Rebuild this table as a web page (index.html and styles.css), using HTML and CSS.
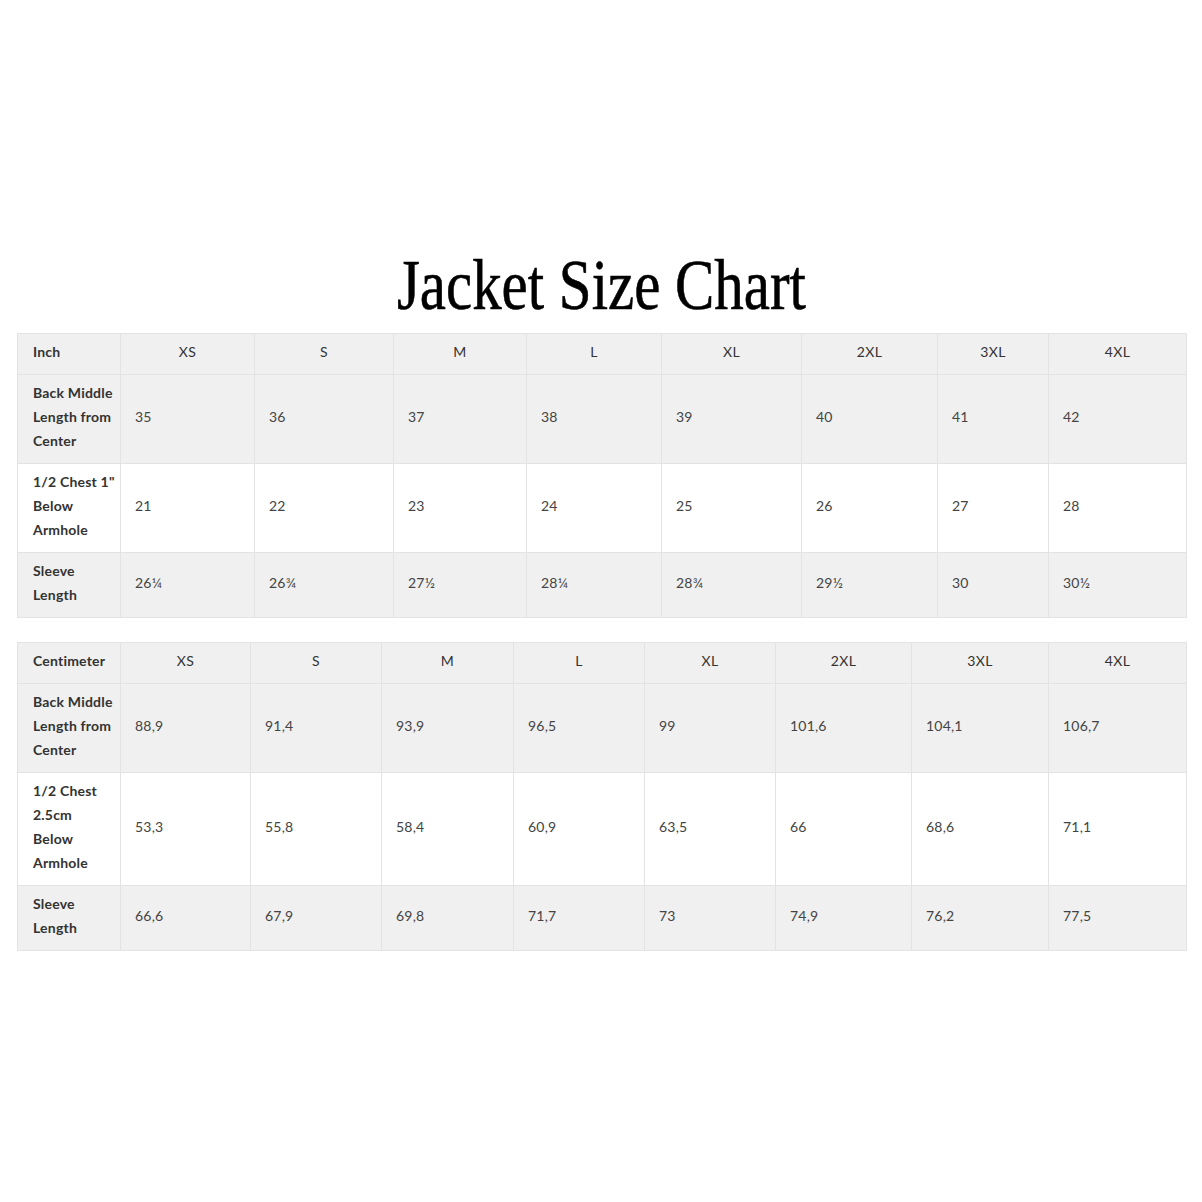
FILE: index.html
```html
<!DOCTYPE html>
<html lang="en">
<head>
<meta charset="utf-8">
<title>Jacket Size Chart</title>
<link rel="stylesheet" href="styles.css">
</head>
<body>
<main class="page">
  <h1 class="title"><span class="title-text">Jacket Size Chart</span></h1>

  <table class="chart chart-inch">
    <colgroup>
      <col><col><col><col><col><col><col><col><col>
    </colgroup>
    <tr class="row-head">
      <th class="label">Inch</th>
      <th>XS</th><th>S</th><th>M</th><th>L</th><th>XL</th><th>2XL</th><th>3XL</th><th>4XL</th>
    </tr>
    <tr class="row-grey">
      <th class="label">Back Middle Length from Center</th>
      <td>35</td><td>36</td><td>37</td><td>38</td><td>39</td><td>40</td><td>41</td><td>42</td>
    </tr>
    <tr class="row-white">
      <th class="label">1/2 Chest 1" Below Armhole</th>
      <td>21</td><td>22</td><td>23</td><td>24</td><td>25</td><td>26</td><td>27</td><td>28</td>
    </tr>
    <tr class="row-grey">
      <th class="label">Sleeve Length</th>
      <td>26¼</td><td>26¾</td><td>27½</td><td>28¼</td><td>28¾</td><td>29½</td><td>30</td><td>30½</td>
    </tr>
  </table>

  <table class="chart chart-cm">
    <colgroup>
      <col><col><col><col><col><col><col><col><col>
    </colgroup>
    <tr class="row-head">
      <th class="label">Centimeter</th>
      <th>XS</th><th>S</th><th>M</th><th>L</th><th>XL</th><th>2XL</th><th>3XL</th><th>4XL</th>
    </tr>
    <tr class="row-grey">
      <th class="label">Back Middle Length from Center</th>
      <td>88,9</td><td>91,4</td><td>93,9</td><td>96,5</td><td>99</td><td>101,6</td><td>104,1</td><td>106,7</td>
    </tr>
    <tr class="row-white">
      <th class="label">1/2 Chest<br>2.5cm<br>Below<br>Armhole</th>
      <td>53,3</td><td>55,8</td><td>58,4</td><td>60,9</td><td>63,5</td><td>66</td><td>68,6</td><td>71,1</td>
    </tr>
    <tr class="row-grey">
      <th class="label">Sleeve Length</th>
      <td>66,6</td><td>67,9</td><td>69,8</td><td>71,7</td><td>73</td><td>74,9</td><td>76,2</td><td>77,5</td>
    </tr>
  </table>
</main>
</body>
</html>
```

FILE: styles.css
```css
html, body {
  margin: 0;
  padding: 0;
  background: #ffffff;
}

.page {
  padding: 240px 16px 0 17px;
  font-family: Lato, "Open Sans", sans-serif;
}

.title {
  margin: 0 0 3px 0;
  height: 90px;
  font-family: "Liberation Serif", serif;
  font-weight: normal;
  font-size: 71px;
  line-height: 90px;
  color: #000000;
  text-align: center;
  white-space: nowrap;
}

.title-text {
  display: inline-block;
  transform: scaleX(0.83);
  transform-origin: center;
  -webkit-text-stroke: 0.6px #000000;
}

.chart {
  width: 1169px;
  table-layout: fixed;
  border-collapse: collapse;
  border: 1px solid #e3e3e3;
  font-size: 14px;
  line-height: 24px;
  color: #444444;
}

.chart-inch {
  margin-bottom: 24px;
}

.chart th,
.chart td {
  border: 1px solid #e3e3e3;
  padding: 6px 14px 10px 14px;
  vertical-align: middle;
}

.chart th {
  font-weight: normal;
  color: #333333;
  text-align: center;
  letter-spacing: 0.3px;
}

.chart td {
  text-align: left;
  letter-spacing: 0.2px;
}

.chart th.label {
  text-align: left;
  font-weight: bold;
  color: #333333;
  padding-left: 15px;
  padding-right: 2px;
  letter-spacing: 0.2px;
}

.row-head,
.row-grey {
  background: #f0f0f0;
}

.row-white {
  background: #ffffff;
}

.chart-inch col:nth-child(1) { width: 103px; }
.chart-inch col:nth-child(2) { width: 134px; }
.chart-inch col:nth-child(3) { width: 139px; }
.chart-inch col:nth-child(4) { width: 133px; }
.chart-inch col:nth-child(5) { width: 135px; }
.chart-inch col:nth-child(6) { width: 140px; }
.chart-inch col:nth-child(7) { width: 136px; }
.chart-inch col:nth-child(8) { width: 111px; }
.chart-inch col:nth-child(9) { width: 138px; }

.chart-cm col:nth-child(1) { width: 103px; }
.chart-cm col:nth-child(2) { width: 130px; }
.chart-cm col:nth-child(3) { width: 131px; }
.chart-cm col:nth-child(4) { width: 132px; }
.chart-cm col:nth-child(5) { width: 131px; }
.chart-cm col:nth-child(6) { width: 131px; }
.chart-cm col:nth-child(7) { width: 136px; }
.chart-cm col:nth-child(8) { width: 137px; }
.chart-cm col:nth-child(9) { width: 138px; }
```
